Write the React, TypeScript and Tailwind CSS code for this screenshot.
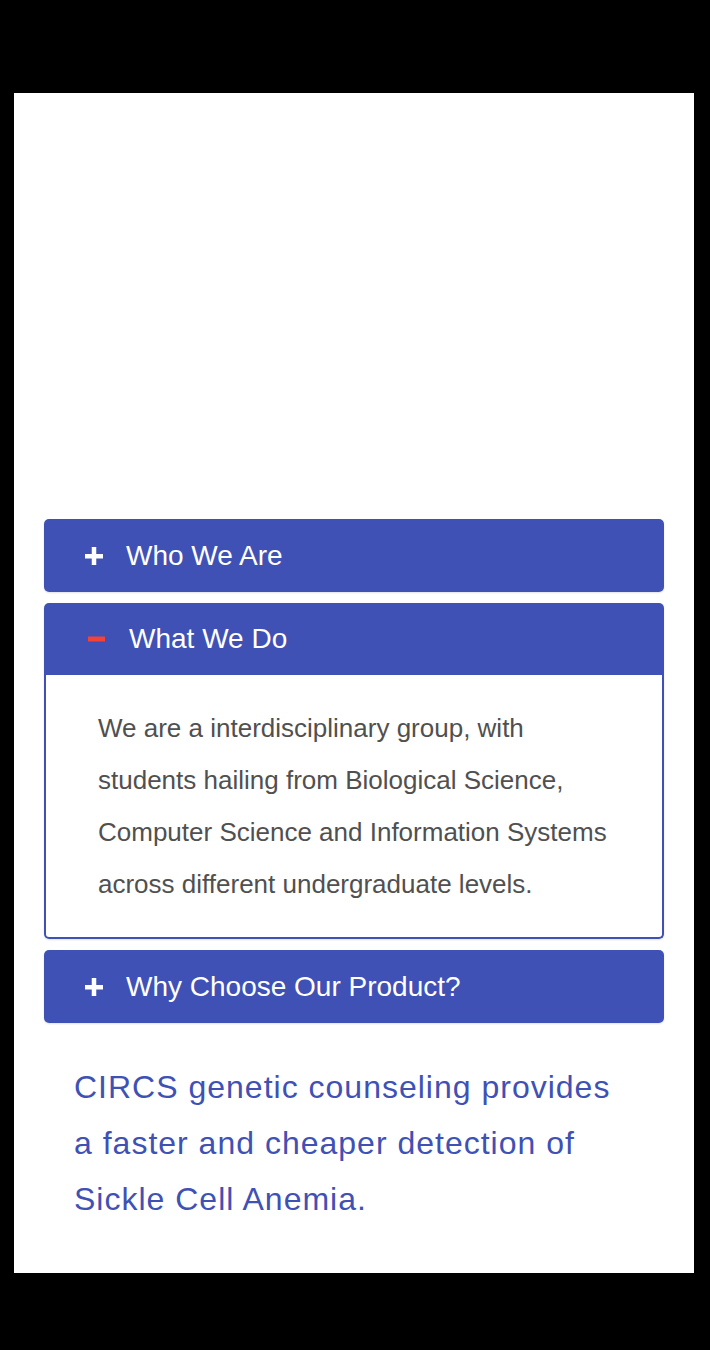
import { useState } from 'react'

const sections = [
  {
    title: 'Who We Are',
    body: '',
  },
  {
    title: 'What We Do',
    body: 'We are a interdisciplinary group, with students hailing from Biological Science, Computer Science and Information Systems across different undergraduate levels.',
  },
  {
    title: 'Why Choose Our Product?',
    body: '',
  },
]

function PlusIcon() {
  return (
    <svg width="18" height="18" viewBox="0 0 18 18" className="shrink-0">
      <rect x="0" y="7" width="18" height="4.5" fill="white" />
      <rect x="6.75" y="0" width="4.5" height="18" fill="white" />
    </svg>
  )
}

function MinusIcon() {
  return (
    <svg width="18" height="18" viewBox="0 0 18 18" className="shrink-0">
      <rect x="1" y="6.5" width="17" height="5" fill="#f44336" />
    </svg>
  )
}

export default function App() {
  const [open, setOpen] = useState<number | null>(1)

  return (
    <div
      className="min-h-screen bg-black pt-[93px] pl-[14px] pr-[16px]"
      style={{ fontFamily: '"Liberation Sans", Arial, Helvetica, sans-serif' }}
    >
      <div className="bg-white h-[1180px] px-[30px] pt-[426px]">
        {/* Accordion */}
        <div className="flex flex-col gap-[11px]">
          {sections.map((s, i) => {
            const isOpen = open === i
            return (
              <div key={i} className="rounded-[5px] shadow-[0_1px_2px_rgba(0,0,0,0.12)]">
                <button
                  onClick={() => setOpen(isOpen ? null : i)}
                  className={
                    'w-full flex items-center bg-[#3f51b5] text-white text-left text-[28px] leading-none ' +
                    (isOpen
                      ? 'h-[72px] rounded-t-[5px] pl-[43px] gap-[24px]'
                      : 'h-[73px] rounded-[5px] pl-[41px] gap-[23px]')
                  }
                >
                  {isOpen ? <MinusIcon /> : <PlusIcon />}
                  <span>{s.title}</span>
                </button>
                {isOpen && (
                  <div className="border-2 border-t-0 border-[#3f51b5] rounded-b-[5px] pl-[52px] pr-[48px] pt-[27px] pb-[27px]">
                    <p className="text-[26px] leading-[52px] text-[#505050]">{s.body}</p>
                  </div>
                )}
              </div>
            )
          })}
        </div>

        {/* Tagline */}
        <p className="mt-[36px] pl-[30px] pr-[34px] text-[32px] leading-[56px] tracking-[1px] text-[#3f51b5]">
          CIRCS genetic counseling provides a faster and cheaper detection of Sickle Cell Anemia.
        </p>
      </div>
    </div>
  )
}
